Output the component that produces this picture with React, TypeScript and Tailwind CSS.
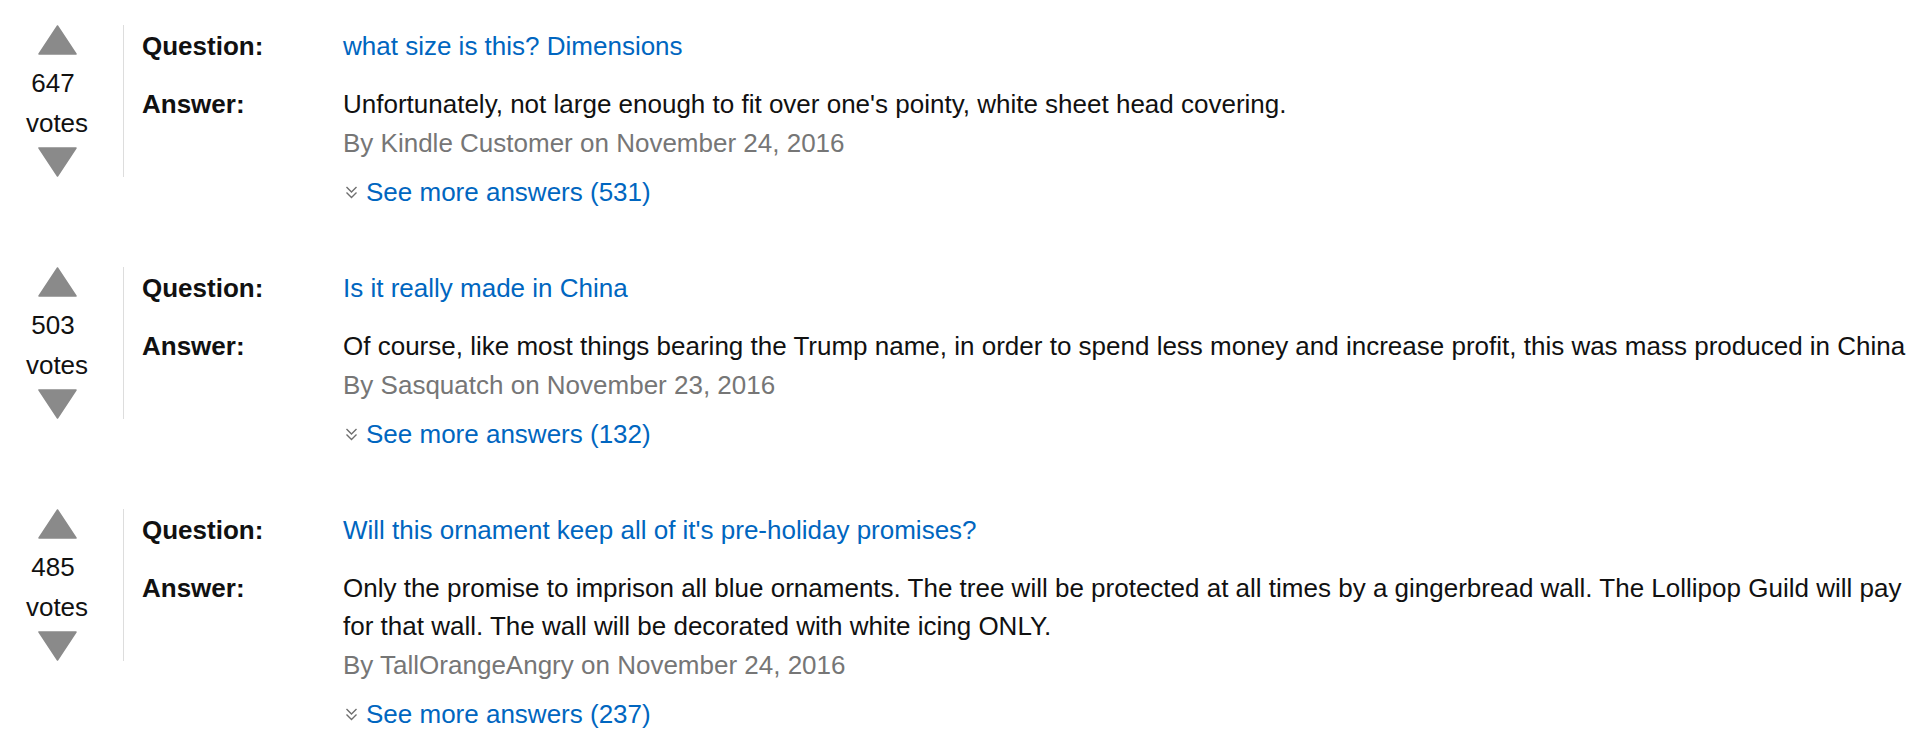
import React from "react";

type Item = {
  votes: number;
  question: string;
  answer: string;
  by: string;
  date: string;
  more: number;
};

const items: Item[] = [
  {
    votes: 647,
    question: "what size is this? Dimensions",
    answer: "Unfortunately, not large enough to fit over one's pointy, white sheet head covering.",
    by: "Kindle Customer",
    date: "November 24, 2016",
    more: 531,
  },
  {
    votes: 503,
    question: "Is it really made in China",
    answer:
      "Of course, like most things bearing the Trump name, in order to spend less money and increase profit, this was mass produced in China",
    by: "Sasquatch",
    date: "November 23, 2016",
    more: 132,
  },
  {
    votes: 485,
    question: "Will this ornament keep all of it's pre-holiday promises?",
    answer:
      "Only the promise to imprison all blue ornaments. The tree will be protected at all times by a gingerbread wall. The Lollipop Guild will pay for that wall. The wall will be decorated with white icing ONLY.",
    by: "TallOrangeAngry",
    date: "November 24, 2016",
    more: 237,
  },
];

function Up() {
  return (
    <svg width="39" height="30" viewBox="0 0 39 30" className="block">
      <polygon points="19.5,1 38,29 1,29" fill="#8a8a8a" stroke="#8a8a8a" strokeWidth="1.5" strokeLinejoin="round" />
    </svg>
  );
}

function Down() {
  return (
    <svg width="39" height="30" viewBox="0 0 39 30" className="block">
      <polygon points="1,1 38,1 19.5,29" fill="#8a8a8a" stroke="#8a8a8a" strokeWidth="1.5" strokeLinejoin="round" />
    </svg>
  );
}

function Chevrons() {
  return (
    <svg width="13" height="13" viewBox="0 0 13 13" className="inline-block ml-[2px] mr-[8px] align-[2px]">
      <polyline points="1.5,1 6.5,6 11.5,1" fill="none" stroke="#6f6f6f" strokeWidth="1.4" />
      <polyline points="1.5,6.5 6.5,11.5 11.5,6.5" fill="none" stroke="#6f6f6f" strokeWidth="1.4" />
    </svg>
  );
}

function Block({ item }: { item: Item }) {
  return (
    <div className="flex items-start pt-[25px] pb-[31px]">
      <div className="w-[124px] pr-[9px] border-r border-[#dddddd] flex flex-col items-center">
        <Up />
        <div className="mt-[8px] leading-[40px] text-[#111] -translate-x-[4px]">{item.votes}</div>
        <div className="leading-[40px] text-[#111]">votes</div>
        <div className="mt-[4px]">
          <Down />
        </div>
      </div>
      <div className="pl-[18px] pt-[2px] flex-1 pr-[10px]">
        <div className="flex leading-[38px]">
          <div className="w-[201px] shrink-0 font-bold text-[#111]">Question:</div>
          <div className="text-[#0066c0]">{item.question}</div>
        </div>
        <div className="flex leading-[38px] mt-[20px]">
          <div className="w-[201px] shrink-0 font-bold text-[#111]">Answer:</div>
          <div className="flex-1">
            <div className="text-[#111]">{item.answer}</div>
            <div className="text-[#767676] mt-[1px]">
              By {item.by} on {item.date}
            </div>
            <div className="mt-[11px] text-[#0066c0]">
              <Chevrons />
              See more answers ({item.more})
            </div>
          </div>
        </div>
      </div>
    </div>
  );
}

export default function App() {
  return (
    <div
      className="bg-white w-[1929px] h-[753px] overflow-hidden text-[26px]"
      style={{ fontFamily: '"Liberation Sans", Arial, sans-serif' }}
    >
      {items.map((it) => (
        <Block key={it.votes} item={it} />
      ))}
    </div>
  );
}
